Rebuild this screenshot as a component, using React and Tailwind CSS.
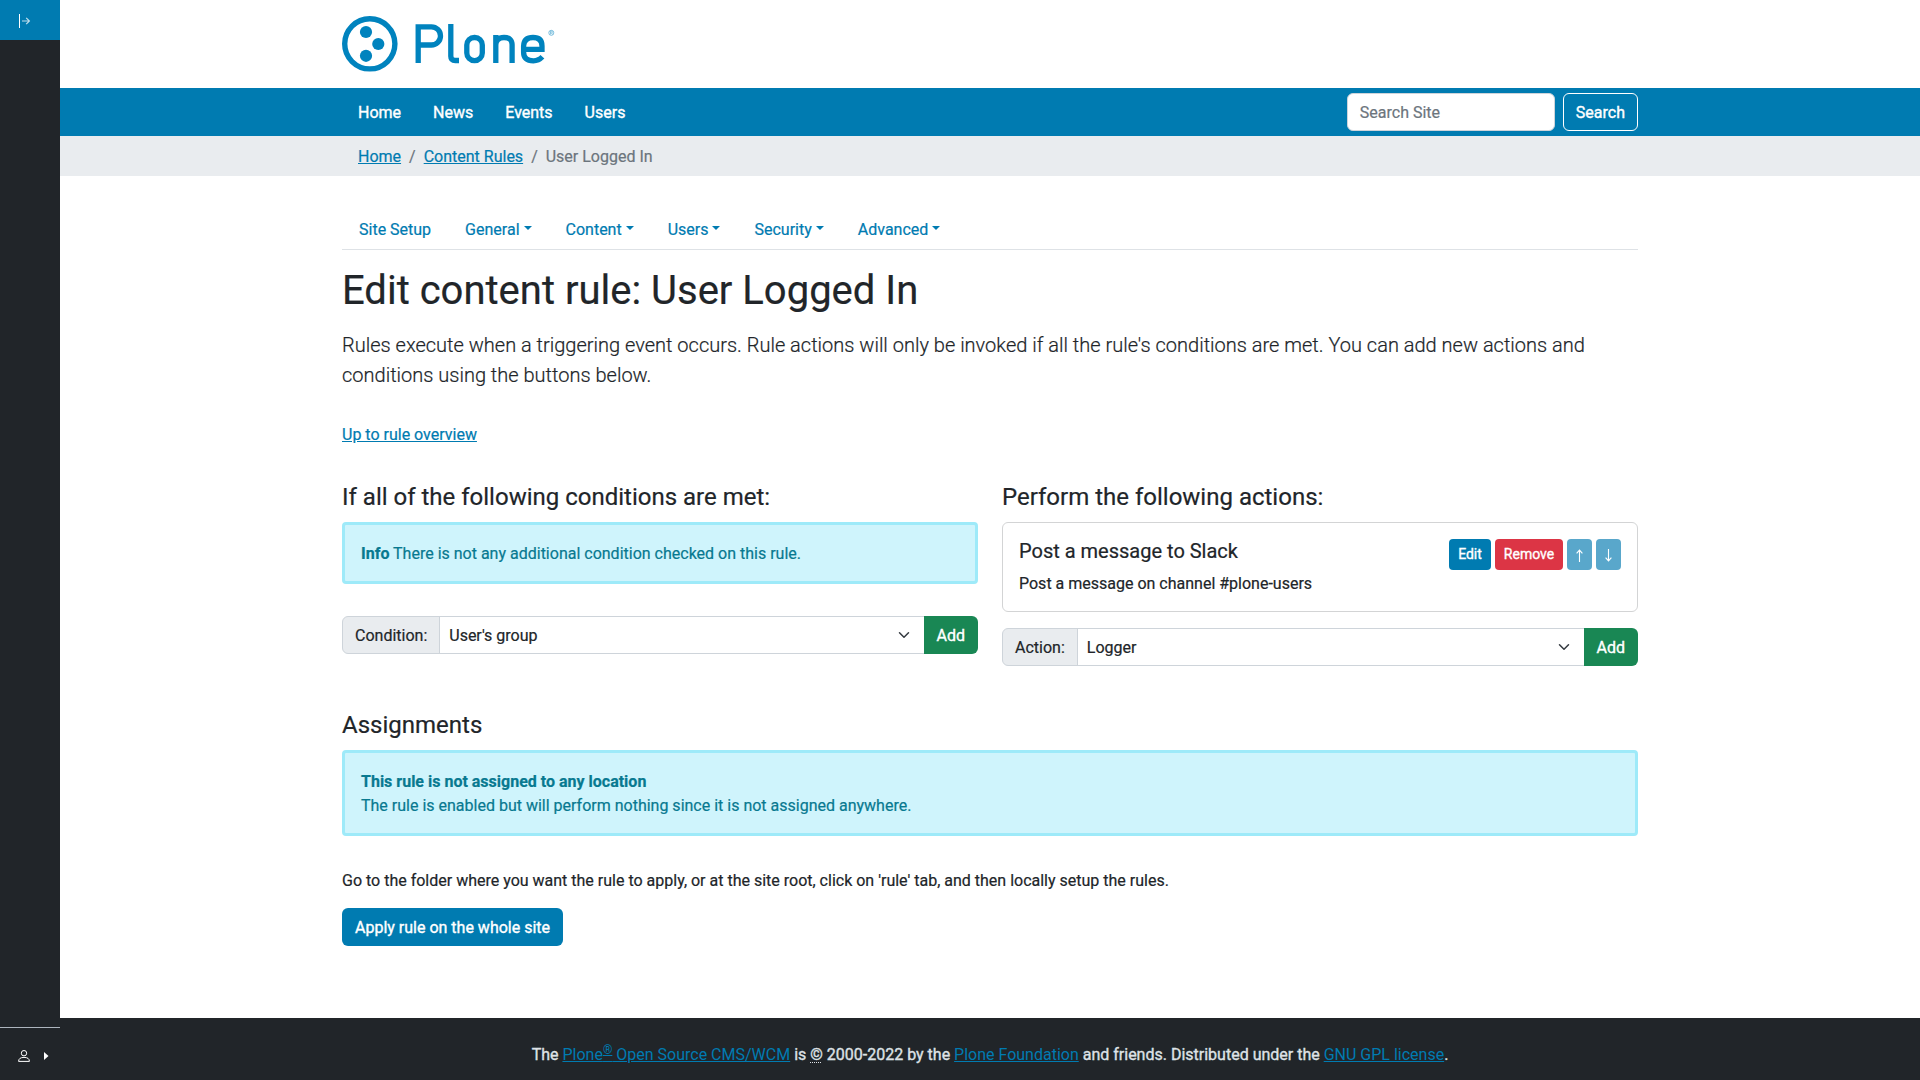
import React from "react";

const link = "text-[#007bb1] underline";
const onDark = "[-webkit-text-stroke:0.35px]";

function PloneLogo() {
  return (
    <svg width="214" height="56" viewBox="0 0 214 56" className="block" role="img" aria-label="Plone">
      <circle cx="27.800" cy="27.800" r="25.100" fill="none" stroke="#0083be" strokeWidth="5.4" />
      <circle cx="24" cy="16" r="6.1" fill="#0083be" />
      <circle cx="36.3" cy="28" r="6.1" fill="#0083be" />
      <circle cx="24" cy="39.8" r="6.1" fill="#0083be" />
      <g fill="none" stroke="#0083be" strokeWidth="5.3">
        <path d="M76.200 47V10.800h13.200a8.900 8.900 0 0 1 0 18.200H76.200" />
        <path d="M108.800 8v32.200q0 4.300 4.500 4.300h3.700" />
        <rect x="124.800" y="21.500" width="15.500" height="23.200" rx="7.600" />
        <path d="M153.800 47V19M153.800 29q0-7.500 8.200-7.500t8.100 7.500V47" />
        <path d="M181.500 33.300h18.500v-3.300q0-8.500-9-8.500t-9.400 8.500v6.300q0 8.500 9.800 8.500q5.300 0 9-4" />
      </g>
      <circle cx="209.300" cy="16.800" r="2.500" fill="none" stroke="#0083be" strokeWidth=".5" />
      <path d="M208.500 18.300v-3h1q1 0 1 .8t-1 .8h-1m1 0l1 1.400" fill="none" stroke="#0083be" strokeWidth=".4" />
    </svg>
  );
}

function Arrow({ down }) {
  return (
    <svg width="7" height="13" viewBox="0 0 7 13" fill="none" stroke="#fff" strokeWidth="1.1" className={down ? "mt-0.5 rotate-180" : "mt-0.5"}>
      <path d="M3.500 13V1M.6 4.400l2.900-3.300 2.900 3.300" />
    </svg>
  );
}

function SelectGroup({ label, value }) {
  return (
    <div className="flex h-[38px]">
      <span className="flex items-center rounded-l-md border border-[#ced4da] bg-[#e9ecef] px-3 pt-0.5">{label}</span>
      <div className="-ml-px flex flex-1 items-center justify-between border border-[#ced4da] bg-white pr-3 pl-[9px]">
        <span className="pt-0.5">{value}</span>
        <svg width="16" height="12" viewBox="0 0 16 16" fill="none" stroke="#343a40" strokeWidth="2" strokeLinecap="round" strokeLinejoin="round">
          <path d="M2 5l6 6 6-6" />
        </svg>
      </div>
      <button className={`-ml-px rounded-r-md bg-[#198754] px-[13px] pt-0.5 text-white ${onDark}`}>Add</button>
    </div>
  );
}

export default function App() {
  return (
    <div className="flex h-[1080px] w-[1920px] overflow-hidden bg-white font-['Roboto',sans-serif] text-base text-[#212529] [-webkit-text-stroke:0.2px]">
      <aside className="flex w-[60px] shrink-0 flex-col justify-between bg-[#212529]">
        <div className="flex h-10 items-center bg-[#007bb1] pt-0.5 pl-[18px]">
          <svg width="13" height="14" viewBox="0 0 13 14" fill="none" stroke="#fff">
            <path d="M1.500 0v14" />
            <path d="M4 7h7.500M8.200 3.800L11.400 7l-3.200 3.200" strokeWidth="1.200" strokeOpacity=".75" />
          </svg>
        </div>
        <div className="flex h-[53px] items-center border-t border-[#adb5bd] pt-1 pl-[18px]">
          <svg width="12" height="12" viewBox="0 0 12 12" fill="none" stroke="#fff">
            <circle cx="6" cy="3.200" r="2.700" />
            <path d="M.6 11.400q0-4 5.400-4t5.400 4z" />
          </svg>
          <svg width="5" height="8" viewBox="0 0 5 8" className="ml-[14px]"><path d="M0 0l4.500 4L0 8z" fill="#fff" /></svg>
        </div>
      </aside>

      <div className="flex flex-1 flex-col">
        <header className="mx-auto h-[88px] w-[1296px] shrink-0 pt-4">
          <PloneLogo />
        </header>
        <div className="h-12 shrink-0 bg-[#007bb1]">
          <div className="mx-auto flex h-12 w-[1296px] items-center justify-between">
            <nav className={`flex gap-8 pt-0.5 pl-4 text-white ${onDark}`}>
              <a>Home</a><a>News</a><a>Events</a><a>Users</a>
            </nav>
            <div className="flex gap-2">
              <div className="flex h-[38px] w-[208px] items-center rounded-md border border-[#ced4da] bg-white px-3 pt-0.5 text-[#6c757d]">Search Site</div>
              <button className={`h-[38px] rounded-md border border-white px-3 pt-0.5 text-white ${onDark}`}>Search</button>
            </div>
          </div>
        </div>
        <div className="h-10 shrink-0 bg-[#e9ecef]">
          <div className="mx-auto flex h-10 w-[1296px] items-center gap-2 pt-0.5 pl-4 text-[#6c757d]">
            <a className={link}>Home</a><span>/</span>
            <a className={link}>Content Rules</a><span>/</span>
            <span>User Logged In</span>
          </div>
        </div>

        <main className="mx-auto w-[1296px] flex-1">
          <nav className="mt-8 flex h-[42px] items-center gap-[34px] border-b border-[#dee2e6] pt-0.5 pl-[17px] text-[#007bb1]">
            <a>Site Setup</a>
            {["General", "Content", "Users", "Security", "Advanced"].map((t) => (
              <a key={t} className="flex items-center gap-1">
                {t}
                <span className="mb-[3px] border-x-[4.8px] border-t-[4.8px] border-x-transparent border-t-[#007bb1]" />
              </a>
            ))}
          </nav>
          <h1 className="mt-[17px] text-[40px] leading-[48px]">Edit content rule: User Logged In</h1>
          <p className="mt-[15px] text-xl leading-[30px] font-light">
            Rules execute when a triggering event occurs. Rule actions will only be invoked if all the rule's conditions are met. You can add new actions and conditions using the buttons below.
          </p>
          <p className="mt-[33px]"><a className={link}>Up to rule overview</a></p>

          <div className="mt-9 grid grid-cols-2 gap-6">
            <section>
              <h2 className="mb-2.5 text-2xl leading-[29px]">If all of the following conditions are met:</h2>
              <div className="mb-8 h-[62px] rounded border-[3px] border-[#9eeaf9] bg-[#cff4fc] px-4 pt-[17px] text-[#087990]">
                <strong>Info</strong> There is not any additional condition checked on this rule.
              </div>
              <SelectGroup label="Condition:" value="User's group" />
            </section>
            <section>
              <h2 className="mb-2.5 text-2xl leading-[29px]">Perform the following actions:</h2>
              <div className="mb-4 flex h-[90px] justify-between rounded-md border border-[#d3d4d5] p-4">
                <div>
                  <h3 className="mb-[9px] text-xl leading-6">Post a message to Slack</h3>
                  <p>Post a message on channel #plone-users</p>
                </div>
                <div className={`flex h-[31px] gap-1 text-sm text-white ${onDark}`}>
                  <button className="w-[42px] rounded bg-[#007bb1] pb-0.5">Edit</button>
                  <button className="w-[68px] rounded bg-[#dc3545] pb-0.5">Remove</button>
                  <button aria-label="Move up" className="flex w-[25px] items-center justify-center rounded bg-[#59a7cb]"><Arrow /></button>
                  <button aria-label="Move down" className="flex w-[25px] items-center justify-center rounded bg-[#59a7cb]"><Arrow down /></button>
                </div>
              </div>
              <SelectGroup label="Action:" value="Logger" />
            </section>
          </div>

          <h2 className="mt-[45px] mb-2.5 text-2xl leading-[29px]">Assignments</h2>
          <div className="h-[86px] rounded border-[3px] border-[#9eeaf9] bg-[#cff4fc] px-4 pt-[17px] text-[#087990]">
            <p className="font-bold">This rule is not assigned to any location</p>
            <p>The rule is enabled but will perform nothing since it is not assigned anywhere.</p>
          </div>
          <p className="mt-[33px] mb-[15px]">Go to the folder where you want the rule to apply, or at the site root, click on 'rule' tab, and then locally setup the rules.</p>
          <button className={`h-[38px] rounded-md bg-[#007bb1] px-[13px] pt-0.5 text-white ${onDark}`}>Apply rule on the whole site</button>
        </main>

        <footer className={`h-[62px] shrink-0 bg-[#212529] pt-[25px] text-center text-[#dee2e6] ${onDark}`}>
          The <a className={`${link} [-webkit-text-stroke:0]`}>Plone<sup className="text-xs underline">®</sup> Open Source CMS/WCM</a> is{" "}
          <abbr className="underline decoration-dotted decoration-1 underline-offset-2">©</abbr> 2000-2022 by the <a className={`${link} [-webkit-text-stroke:0]`}>Plone Foundation</a> and friends. Distributed under the{" "}
          <a className={`${link} [-webkit-text-stroke:0]`}>GNU GPL license</a>.
        </footer>
      </div>
    </div>
  );
}
